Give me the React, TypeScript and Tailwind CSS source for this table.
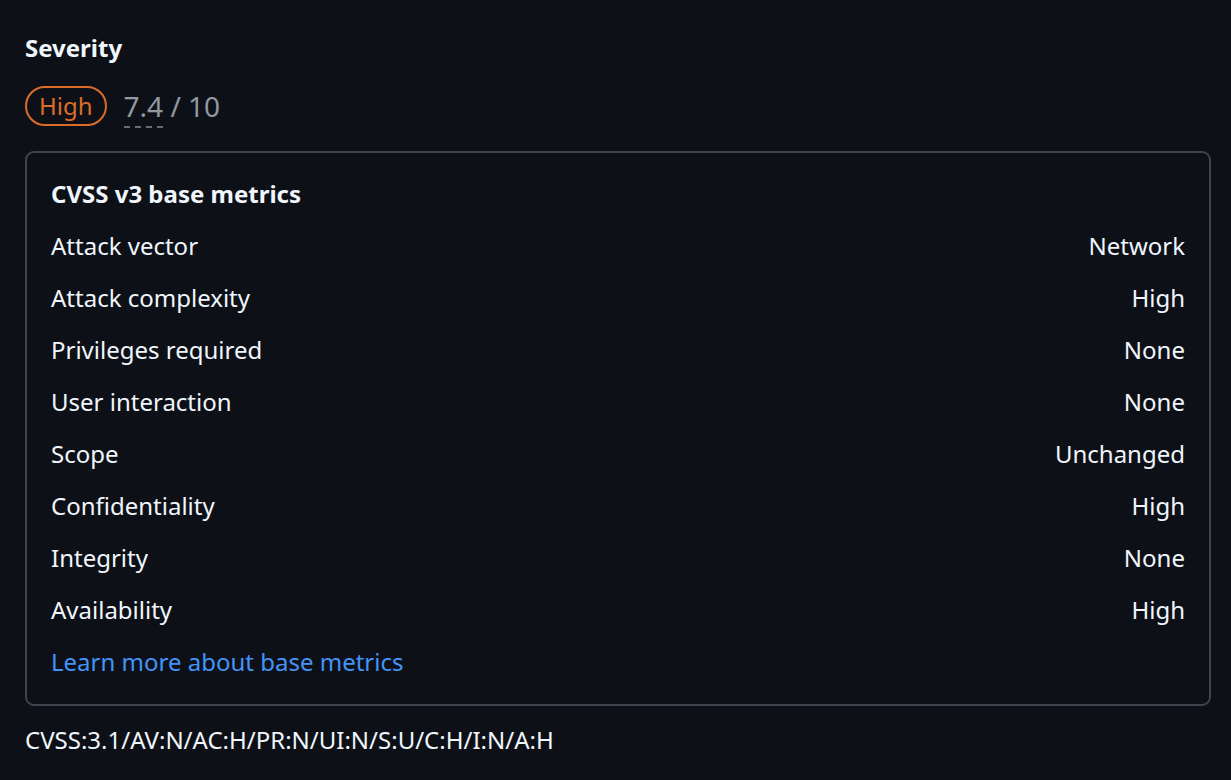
const metrics: [string, string][] = [
  ['Attack vector', 'Network'],
  ['Attack complexity', 'High'],
  ['Privileges required', 'None'],
  ['User interaction', 'None'],
  ['Scope', 'Unchanged'],
  ['Confidentiality', 'High'],
  ['Integrity', 'None'],
  ['Availability', 'High'],
];

export default function App() {
  return (
    <div
      className="min-h-[780px] bg-[#0d1117] px-[25px] pt-[32px] text-[#f0f6fc]"
      style={{ fontFamily: '"Noto Sans", "Open Sans", sans-serif' }}
    >
      <h3 className="text-[24px] font-bold leading-[32px]">Severity</h3>

      <div className="mt-[22px] flex items-center gap-[17px]">
        <span className="flex h-[40px] items-center rounded-full border-2 border-[#db6d28] px-[12px] text-[24px] leading-none text-[#db6d28]">
          High
        </span>
        <span className="-mt-[1px] text-[28px] leading-[40px] text-[#9198a1]">
          <span className="border-b-2 border-dashed border-[#656c76] pb-[1px]">7.4</span> / 10
        </span>
      </div>

      <div className="mt-[25px] w-[1186px] rounded-[9px] border-2 border-[#3d444d] px-[24px] pt-[23px] pb-[24px]">
        <h4 className="text-[24px] font-bold leading-[36px]">CVSS v3 base metrics</h4>
        <div className="mt-[16px] flex flex-col gap-[16px]">
          {metrics.map(([k, v]) => (
            <div key={k} className="flex justify-between text-[24px] leading-[36px]">
              <span>{k}</span>
              <span>{v}</span>
            </div>
          ))}
          <a className="text-[24px] leading-[36px] text-[#4493f8]" href="#">
            Learn more about base metrics
          </a>
        </div>
      </div>

      <p className="mt-[16px] text-[24px] leading-[36px]">CVSS:3.1/AV:N/AC:H/PR:N/UI:N/S:U/C:H/I:N/A:H</p>
    </div>
  );
}
